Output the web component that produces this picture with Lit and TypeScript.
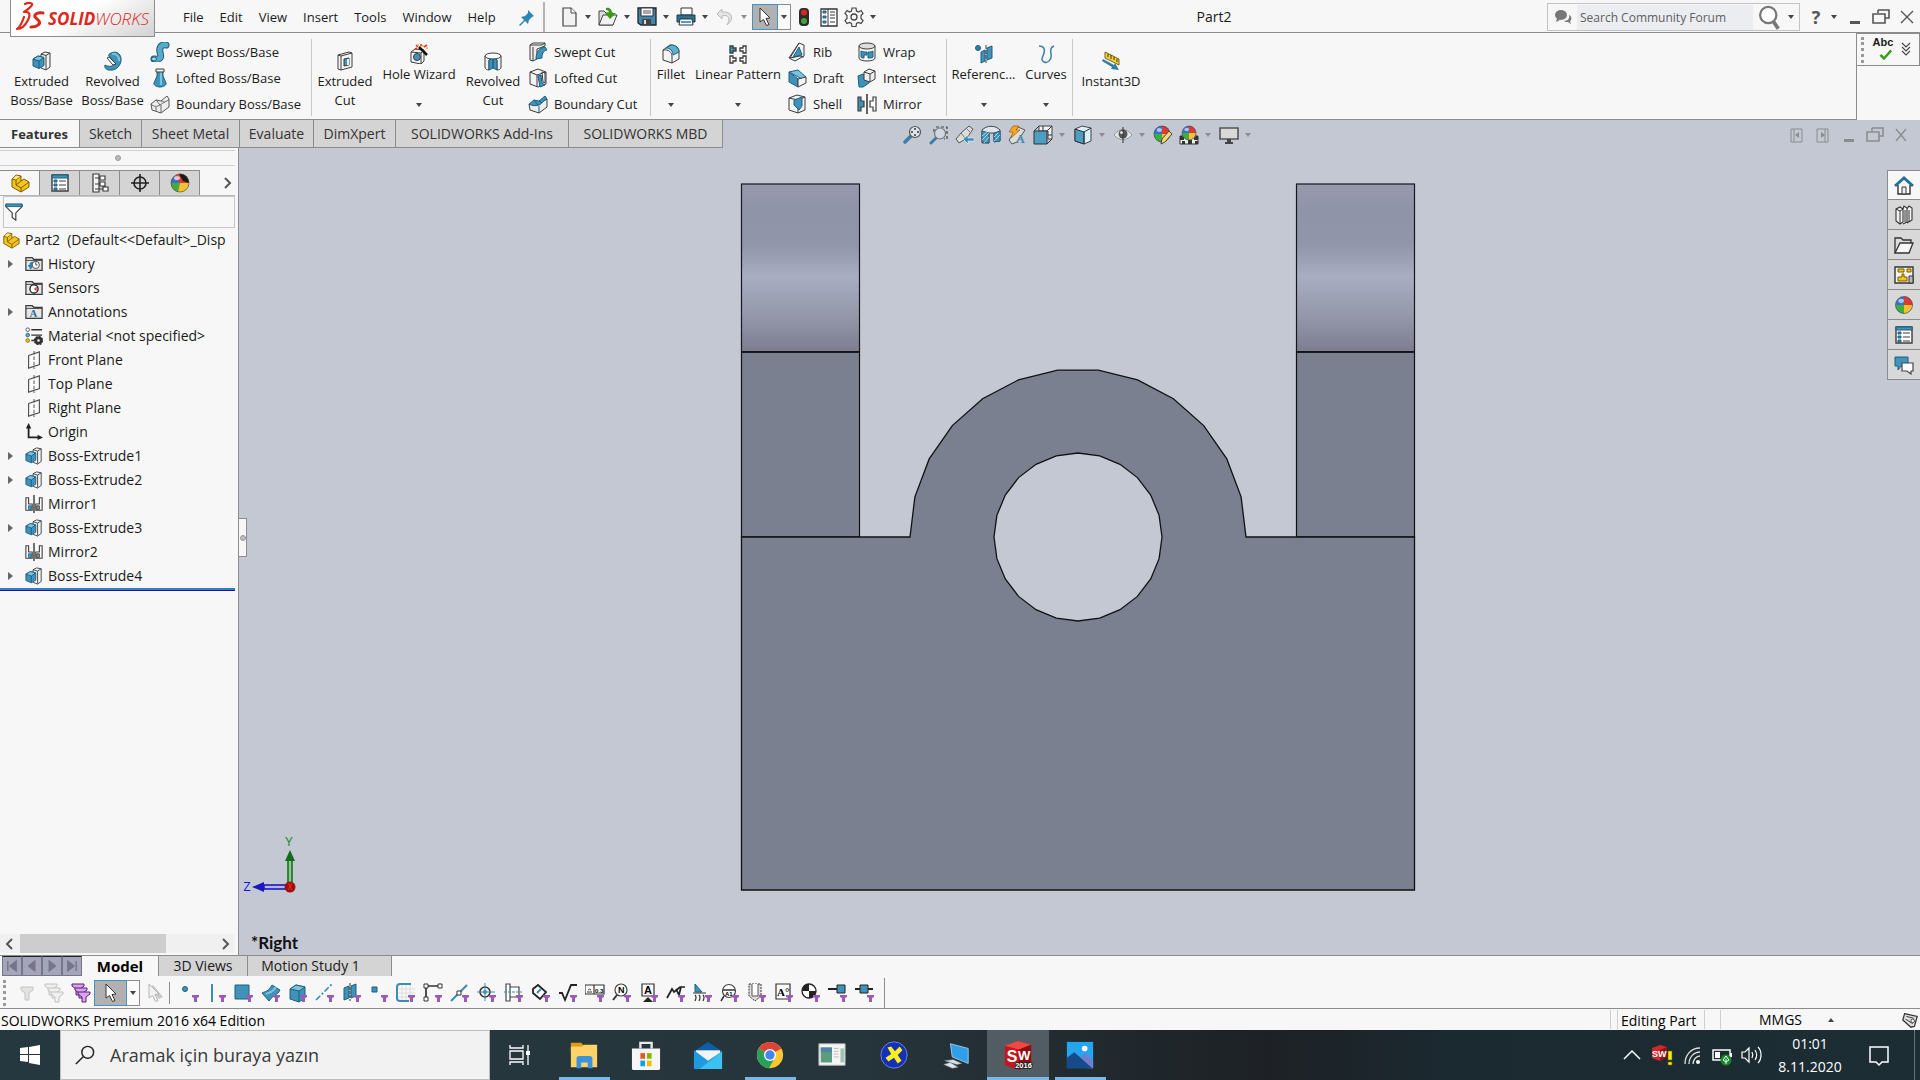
import { LitElement, html, svg, css, TemplateResult, SVGTemplateResult } from "lit";
import { customElement, state } from "lit/decorators.js";
import { classMap } from "lit/directives/class-map.js";

/* ---------- icon artwork, drawn on a 20 x 20 grid ---------- */

const K = "#3c3c3c";
const B = "#3f93b8";
const L = "#7cc3de";
const D = "#1d5f80";

const slabCube = svg`
  <path d="M9 3l4-2 5 1v14l-4 3-5-2z" fill="#f4f4f4" stroke=${K} />
  <path d="M14 4.500v14M9 3l5 1.500 4-2.500" fill="none" stroke=${K} />
  <path d="M1 8l5-3 6 1.500v8l-5 3-6-2.500z" fill=${B} stroke=${D} />
  <path d="M1 8l6 2 5-3.500-6-1.500z" fill=${L} stroke=${D} /><path d="M7 10v7.500" stroke=${D} />`;

const ball = (cx: number, cy: number, r: number) => svg`
  <circle cx=${cx} cy=${cy} r=${r} fill="#3b6fd0" />
  <path d="M${cx} ${cy - r}a${r} ${r} 0 0 1 ${r} ${r}h-${r}z" fill="#dc3a33" />
  <path d="M${cx - r} ${cy}a${r} ${r} 0 0 0 ${r} ${r}v-${r}z" fill="#3fae3b" />
  <path d="M${cx} ${cy + r}a${r} ${r} 0 0 0 ${r} -${r}h-${r}z" fill="#f1c232" />
  <ellipse cx=${cx - r / 3} cy=${cy - r / 2} rx=${r / 3} ry=${r / 4} fill="#fff" opacity=".6" />
  <circle cx=${cx} cy=${cy} r=${r} fill="none" stroke="#444" stroke-width=".6" />`;

const managerBall = svg`
  <circle cx="10" cy="10" r="9" fill="#e0392f" />
  <path d="M10 10L1 10a9 9 0 0 1 4-7z" fill="#3b6fd0" /><path d="M10 10H1a9 9 0 0 0 7 9z" fill="#3fae3b" />
  <path d="M10 10l-2 9a9 9 0 0 0 11-9z" fill="#f1c232" /><path d="M9 1c6-1 10 4 10 9l-6-2z" fill="#191919" />
  <ellipse cx="7" cy="5" rx="3" ry="2" fill="#fff" opacity=".7" /><circle cx="10" cy="10" r="9" fill="none" stroke="#444" stroke-width=".6" />`;

const funnel = svg`<path d="M12 12h7v2l-2 1v4h-3v-4l-2-1z" fill="#9a5bb5" />`;

const folder = svg`
  <path d="M1 17V3h7l2 2h9v12z" fill="#e6e6e6" stroke=${K} stroke-width="1.400" />
  <path d="M1 6h18" stroke=${K} />`;

const part = svg`
  <path d="M2 6l4-4 5 1v5l3-2 5 3v5l-8 5-9-5z" fill="#f5c518" stroke="#7a5a08" />
  <path d="M2 6l4 1v5l5 3 8-6M6 7l5-4M11 15v4M6 12l5-4" fill="none" stroke="#7a5a08" />
  <path d="M3 5.500l3-3 4 1-4 3z" fill="#ffe680" />`;

const cursor = (fill: string, line: string) => svg`
  <path d="M5 1l10 10-4 .500 3 6-2.500 1-3-6L5 15z" fill=${fill} stroke=${line} />`;

const tripleFunnel = (fill: string, line: string) => svg`
  <path d="M1 1h12v2l-4 3v6H5V6L1 3z" fill=${fill} stroke=${line} />
  <path d="M4 5h12v2l-4 3v5H8v-5L4 7z" fill=${fill} stroke=${line} />
  <path d="M7 9h12v2l-4 3v5h-4v-5L7 11z" fill=${fill} stroke=${line} />`;

const cube = svg`
  <path d="M2 6l6-4 9 2v11l-6 4-9-3z" fill=${B} stroke=${D} />
  <path d="M2 6l9 2 6-4-9-2z" fill=${L} stroke=${D} /><path d="M11 8v11" stroke=${D} />`;

const plane = svg`
  <path d="M4 5l12-4v14L4 19z" fill="#fbfbfb" stroke="#555" stroke-width="1.300" />
  <path d="M10 0v20" stroke="#444" stroke-dasharray="4 2" />`;

const restore = (c: string) => svg`
  <path d="M7 3h11v8h-4M7 3v3M2 7h12v9H2z" fill="none" stroke=${c} stroke-width="1.600" />`;

const listIcon = svg`
  <path d="M2 2h16v16H2z" fill="#fff" stroke=${K} stroke-width="1.400" />
  <path d="M2 2h16v3H2z" fill=${B} stroke=${D} />
  <path d="M4 7h3v2H4zM4 11h3v2H4zM4 15h3v2H4z" fill=${B} stroke=${D} />
  <path d="M9 8h7M9 12h7M9 16h7" stroke=${K} />`;

const ICONS: Record<string, SVGTemplateResult> = {
  /* ribbon */
  bossExtrude: slabCube,
  bossRevolve: svg`
    <path d="M8 2C14-1 19 4 18 10S12 20 6 19c-3 0-5-3-4-5 3 2 9 2 10-2L6 5C5 4 6 3 8 2z" fill=${B} stroke=${D} />
    <path d="M9 3c4-1 8 3 7 7" stroke=${L} stroke-width="2" fill="none" />
    <path d="M6 6l7 7-3 1-6-7z" fill="#fff" stroke=${K} />`,
  bossSweep: svg`
    <path d="M4 17c8 1 7-3 6-7s1-8 6-7" fill="none" stroke=${D} stroke-width="7" stroke-linecap="round" />
    <path d="M4 17c8 1 7-3 6-7s1-8 6-7" fill="none" stroke="#58a9ca" stroke-width="5" stroke-linecap="round" />
    <ellipse cx="4" cy="17" rx="2.500" ry="2" fill="#9fd6ea" stroke=${D} />`,
  bossLoft: svg`
    <path d="M7 2h6v6l3 7c1 2-3 4-6 4s-7-2-6-4l3-7z" fill=${B} stroke=${D} />
    <path d="M11 4v13" stroke=${L} stroke-width="2" /><path d="M6 1h8v3H6z" fill="#f0f0f0" stroke=${K} />`,
  bossBoundary: svg`
    <path d="M1 10l5-4 5 1 6-5 2 3v8l-8 6-9-3z" fill="#eee" stroke="#555" />
    <path d="M1 10c3 3 6 3 9 1s4-3 9-5M11 11v8M6 6c1 2 3 3 4 5M11 7c2 0 3 1 4 2M6 13v4" fill="none" stroke="#666" />`,
  cutExtrude: svg`
    <path d="M3 4l11-3 3 1v14l-11 3-3-1z" fill="#f5f5f5" stroke=${K} /><path d="M6 5l11-3M6 5v14M3 4l3 1" stroke=${K} fill="none" />
    <path d="M9 8l5-1v7l-5 1z" fill=${B} stroke=${K} /><path d="M12 8h2v6h-2z" fill="#dff2fa" />`,
  holeWizard: svg`
    <path d="M2 8l4-3 9 1v11l-3 3-10-2z" fill="#f3f3f3" stroke=${K} /><path d="M2 8l10 1 3-3M12 9v11" fill="none" stroke=${K} />
    <circle cx="8" cy="13" r="3.500" fill=${B} stroke=${K} />
    <path d="M10 3l8 8" stroke="#111" stroke-width="2.500" />
    <path d="M7 1l2 2M12 0v2M15 3l3-2M6 5l2-1" stroke="#d33" stroke-width="1.600" /><path d="M9 0v2M14 1v2M17 4h2" stroke="#f3b51b" stroke-width="1.600" />`,
  cutRevolve: svg`
    <path d="M2 5v11c0 2 2 3 4 3V9l4-3 4 3v10c2 0 4-1 4-3V5z" fill="#f2f2f2" stroke=${K} />
    <path d="M6 9l4-3v11l-4 2zM14 9l-4-3v11l4 2z" fill=${B} stroke=${D} />
    <ellipse cx="10" cy="5" rx="8" ry="3" fill="#fafafa" stroke=${K} />`,
  cutSweep: svg`
    <path d="M2 3l3-2h12v3l-8 3v10l-4 2-3-1z" fill="#eee" stroke=${K} /><path d="M2 3h12l3-2M5 5v14" stroke=${K} fill="none" />
    <path d="M8 17c0-7 3-11 9-12l2 3c-4 1-5 4-5 8z" fill=${B} stroke=${D} />`,
  cutLoft: svg`
    <path d="M2 4l8-3 8 3v12l-8 3-8-3z" fill="#f3f3f3" stroke=${K} /><path d="M2 4l7 3v12M9 7l9-3" fill="none" stroke=${K} />
    <path d="M10 8l3-1 1 8 3 2-5 2z" fill=${B} stroke=${D} /><path d="M14 4l3 1v10l-2-1z" fill="#fff" stroke=${K} />`,
  cutBoundary: svg`
    <path d="M1 10l8 1 10-6v8l-8 6-9-3z" fill="#eee" stroke=${K} />
    <path d="M1 10l5-4 5 1 6-5 2 3c-4 1-5 5-8 6s-7 1-10-1z" fill=${B} stroke=${D} /><path d="M6 6l4 5M11 7l3 2M11 12v7" stroke=${D} />`,
  fillet: svg`
    <path d="M2 6l7-5c5 0 9 2 9 7v7l-7 4-9-3z" fill="#f5f5f5" stroke=${K} /><path d="M2 6c6-1 9 3 9 6v7" fill="none" stroke=${K} />
    <path d="M5 4l5-3c5 0 8 3 8 7l-6 3C12 7 9 4 5 4z" fill="#5fb0d0" stroke=${D} />`,
  pattern: svg`
    <path d="M2 2h3v2h3v3H5v2H2z" fill=${B} stroke=${K} stroke-width="1.300" />
    <path d="M12 4h3V2h3v7h-3V7h-3zM2 12h3v2h3v3H5v2H2zM12 14h3v-2h3v7h-3v-2h-3z" fill="#fff" stroke=${K} stroke-width="1.300" />`,
  rib: svg`
    <path d="M12 1l5 2v11l-9 5-6-3z" fill="#f2f2f2" stroke=${K} /><path d="M12 1l-9 15 10-2 4 1" fill="none" stroke=${K} />
    <path d="M12 5l3 8-9 2z" fill=${B} stroke=${D} />`,
  draft: svg`
    <path d="M2 4l9-2 8 7-4 2z" fill=${L} stroke=${D} /><path d="M2 4l9 7v8l-9-5z" fill=${B} stroke=${D} />
    <path d="M11 11l8-2v6l-8 4z" fill="#f3f3f3" stroke=${K} />`,
  shell: svg`
    <path d="M2 4l8-3 8 2v13l-7 3-9-3z" fill="#f4f4f4" stroke=${K} /><path d="M2 4l9 2v13M11 6l7-3" fill="none" stroke=${K} />
    <path d="M7 6l8-3v9l-3 4-5-5z" fill=${B} stroke=${D} />`,
  wrap: svg`
    <path d="M2 4v12c0 4 16 4 16 0V4z" fill="#f4f4f4" stroke=${K} /><ellipse cx="10" cy="4" rx="8" ry="3" fill="#ddd" stroke=${K} />
    <path d="M4 9c2 1 4 1 6 1v3H7v3c-1 0-3 0-3-1zM11 10c2 0 4 0 5-1v6c-1 1-3 1-5 1z" fill=${B} stroke=${D} />`,
  intersect: svg`
    <path d="M1 8l5-2 6 5v4l-6 4H2z" fill=${B} stroke=${D} /><path d="M7 4l5-3 6 2v8l-5 3-6-2z" fill="#eee" stroke=${K} />
    <path d="M7 4l6 2 5-3M13 6v8" fill="none" stroke=${K} />`,
  mirror: svg`
    <path d="M1 3h3v4h3v6H4v4H1z" fill=${B} stroke=${K} stroke-width="1.200" />
    <path d="M19 3h-3v4h-3v6h3v4h3z" fill="#fff" stroke=${K} stroke-width="1.200" /><path d="M10 0v20" stroke="#111" stroke-width="1.300" />`,
  reference: svg`
    <circle cx="4" cy="4" r="2.500" fill="#2b7fa8" stroke=${D} />
    <path d="M7 8l4-2v11l-4 2zM13 4l5-2v12l-5 2z" fill=${B} stroke=${D} /><path d="M12 1v18" stroke=${K} stroke-dasharray="4 1" />`,
  curves: svg`<path d="M3 2c5 0 6 3 5 7s-4 7 0 9 8-3 7-8 0-7 3-8" fill="none" stroke="#3c7fa8" stroke-width="1.500" />`,
  instant: svg`
    <path d="M4 1l14 7v6L4 7z" fill="#f5d23c" stroke="#7b6510" /><path d="M7 3v3M10 4v4M13 6v3M16 8v3" stroke="#333" />
    <path d="M2 8l11 6 1-2 4 7-8-1 1-2L1 10z" fill="#2f7ea5" />`,

  /* title bar */
  pin: svg`<path d="M11 3l6 6-2 1-3 3-1 4-3-3-5 5-1-1 5-5-3-3 4-1 3-3z" fill="#2e86b5" />`,
  newDoc: svg`<path d="M4 1h8l5 5v13H4z" fill="#f2f2f2" stroke="#444" stroke-width="1.200" /><path d="M12 1v5h5" fill="#fff" stroke="#444" />`,
  open: svg`
    <path d="M1 18V4h5l2 2h7v12z" fill="#ddd" stroke="#444" /><path d="M1 18l4-10h14l-4 10z" fill="#f1f1f1" stroke="#444" />
    <path d="M8 1c4-1 6 2 6 5h4l-6 6-5-6h4c0-2-1-3-3-3z" fill="#3a9b12" />`,
  save: svg`
    <path d="M1 1h18v17H4l-3-2z" fill="#3f88ad" stroke="#222" stroke-width="1.300" /><path d="M4 1h12v8H4z" fill="#fff" stroke="#333" />
    <path d="M6 4h8M6 6h8" stroke="#555" /><path d="M5 12h9v6H5z" fill="#444" /><path d="M7 13h2v4H7z" fill="#ddd" />`,
  print: svg`
    <path d="M5 1h11v7H5z" fill="#fff" stroke="#333" /><path d="M1 8h18v7H1z" fill="#2f6f92" stroke="#1e3d4d" />
    <path d="M4 12h12l1 6H3z" fill="#fff" stroke="#333" /><path d="M5 15h10" stroke="#4ba3c7" stroke-width="2" />`,
  undo: svg`<path d="M7 2L2 7l5 5V9c6-2 9 2 5 9 8-6 5-14-5-13z" fill="#e4e4e4" stroke="#b9b9b9" />`,
  select: cursor("#fff", "#333"),
  traffic: svg`
    <rect x="5" y="1" width="10" height="18" rx="4" fill="#2b2b2b" /><circle cx="10" cy="5.500" r="3" fill="#d6281e" /><circle cx="10" cy="14" r="3" fill="#3fa43a" />`,
  options: svg`
    <path d="M2 2h16v17H2z" fill="#fff" stroke="#333" stroke-width="1.300" /><path d="M9 2v17" stroke="#333" />
    <path d="M4 4h3v2H4zM4 9h3v2H4zM4 14h3v2H4z" fill=${B} stroke=${D} /><path d="M11 5h5M11 8h5M11 11h5M11 15h5" stroke="#333" />`,
  gear: svg`<circle cx="10" cy="10" r="3" fill="none" stroke="#444" stroke-width="1.300" />
    <path d="M8 1h4l.5 3 2 1 2.500-1.500 2 3-2 2v3l2 2-2 3-2.500-1-2 1-.5 3H8l-.5-3-2-1L3 16.500l-2-3 2-2v-3l-2-2 2-3L5.500 5l2-1z" fill="none" stroke="#444" stroke-width="1.200" />`,
  bubbles: svg`<ellipse cx="8" cy="8" rx="6" ry="5" fill="#777" /><path d="M4 11l-1 4 4-2zM11 14c4 0 6-3 5-6 3 1 3 5 1 6l1 3-3-2c-2 0-3 0-4-1z" fill="#777" />`,
  magnifier: svg`<circle cx="9" cy="8" r="6.500" fill="#fff" stroke="#777" stroke-width="1.800" /><path d="M13 13l4 6" stroke="#777" stroke-width="3" />`,
  minimize: svg`<path d="M5 14h10v3H5z" fill="#555" />`,
  restore: restore("#555"),
  close: svg`<path d="M4 4l12 12M16 4L4 16" stroke="#555" stroke-width="1.400" />`,
  minimizeDim: svg`<path d="M5 14h10v3H5z" fill="#8b8c92" />`,
  restoreDim: restore("#8b8c92"),
  closeDim: svg`<path d="M5 4l10 12M15 4L5 16" stroke="#8b8c92" stroke-width="1.300" />`,
  dockLeft: svg`<path d="M4 4h11v13H4zM7 4v13" fill="none" stroke="#8b8c92" /><path d="M12 7v6l-4-3z" fill="#8b8c92" />`,
  dockRight: svg`<path d="M4 4h11v13H4zM12 4v13" fill="none" stroke="#8b8c92" /><path d="M8 7v6l4-3z" fill="#8b8c92" />`,
  spell: svg`<path d="M7 10l3 3 7-8 2 2-9 10-5-5z" fill="#34a012" />`,
  more: svg`<path d="M6 3l4 4 4-4M6 7l4 4 4-4M6 11l4 4 4-4" fill="none" stroke="#444" stroke-width="1.100" />`,

  /* heads-up view toolbar */
  zoomFit: svg`<path d="M2 17l6-6" stroke="#3b7da6" stroke-width="3.500" stroke-linecap="round" /><circle cx="12" cy="7" r="5.500" fill="#dfe5ee" stroke="#555" stroke-width="1.200" />
    <path d="M12 3v2M12 9v2M8 7h2M14 7h2" stroke="#333" stroke-width="1.500" />`,
  zoomArea: svg`<path d="M7 2h11v12h-3M5 4v4" fill="none" stroke="#444" stroke-width="1.200" stroke-dasharray="3 2" />
    <path d="M2 18l5-5" stroke="#3b7da6" stroke-width="3" stroke-linecap="round" /><circle cx="11" cy="8.500" r="5.500" fill="#cfd7e2" stroke="#777" stroke-width="1.200" />`,
  prevView: svg`<path d="M1 14l5-6 8-7 4 3-6 9-8 5z" fill="#ddd" stroke="#555" /><path d="M11 3l5 5M6 8l4 5" stroke="#777" />
    <path d="M8 14l5-4v3h6v3h-6v3z" fill="#3b8db5" stroke="#fff" stroke-width=".5" />`,
  section: svg`<path d="M1 5c5-5 13-5 18 0v11h-6V8H8v10H1z" fill="#e2e4e9" stroke="#444" /><path d="M1 6l7 2v10l-7-1zM13 8l6-2v10l-6 1z" fill="#4496bb" stroke=${D} />
    <path d="M1 11l5-4M1 15l7-7M3 18l5-6M13 12l4-4M13 16l6-6" stroke="#cde" stroke-width=".8" />`,
  viewTools: svg`<path d="M2 15l9-13 7 3-8 12-5 2z" fill="#ddd" stroke="#555" /><path d="M6 1h6l-3 4h4l-9 8 2-6H2z" fill="#f5a623" stroke="#a85d00" stroke-width=".7" />
    <text x="9" y="18" font-size="12" font-family="Liberation Serif, serif" font-weight="bold" fill="#3b8db5">A</text>`,
  orient: svg`<path d="M6 1h13v13h-4V6H6z" fill="#eef0f4" stroke="#444" /><path d="M1 6h13v13H1z" fill="#4c9ec4" stroke="#333" /><path d="M1 6l5-5M14 6l5-5M14 19l5-5M10 1v5M15 10h4" stroke="#333" fill="none" />`,
  display: svg`<path d="M2 4l7-3 9 2v13l-7 3-9-3z" fill="#d9f0f8" stroke="#444" /><path d="M2 4l9 3v12l-9-3z" fill="#4c9ec4" stroke="#333" /><path d="M11 7l7-4M11 7v12" stroke="#333" fill="none" />`,
  eye: svg`<path d="M1 10c5-7 13-7 18 0-5 6-13 6-18 0z" fill="#e6e7ea" stroke="#999" /><circle cx="10" cy="9" r="4.500" fill="#555" /><path d="M10 2v16" stroke="#333" /><circle cx="8.500" cy="7.500" r="1.500" fill="#ddd" />`,
  appearance: svg`${ball(9, 9, 8)}<path d="M9 14l7-8 3 3-7 8-4 2z" fill="#f4d87c" stroke="#444" />`,
  scene: svg`<path d="M1 11h18v8H1z" fill="#eee" stroke="#333" /><path d="M1 11h4v4H1zM9 15h4v4H9zM15 11h4v4h-4zM3 16h3v3H3zM16 16h3v3h-3z" fill="#333" />${ball(10, 8, 7)}`,
  monitor: svg`<path d="M1 3h18v11H1z" fill="#d8d8d8" stroke="#555" stroke-width="1.600" /><path d="M8 14h4v3h2v2H6v-2h2z" fill="#444" />`,

  /* feature manager */
  part,
  property: listIcon,
  config: svg`<path d="M3 1h6v18H3z" fill="#f5f5f5" stroke=${K} stroke-width="1.200" /><path d="M5 5h5M5 11h5M5 16h8" stroke=${K} />
    <path d="M10 3h5v4h-5zM10 9h5v4h-5zM13 14h5v4h-5z" fill="#fff" stroke=${K} stroke-width="1.200" />`,
  dimx: svg`<circle cx="10" cy="10" r="6" fill="none" stroke="#222" stroke-width="1.600" /><path d="M10 1v18M1 10h18" stroke="#222" stroke-width="1.600" />`,
  displayMgr: managerBall,
  next: svg`<path d="M8 5l5 5-5 5" fill="none" stroke="#555" stroke-width="2" />`,
  prev: svg`<path d="M12 5l-5 5 5 5" fill="none" stroke="#555" stroke-width="2" />`,
  filter: svg`<path d="M1 2h18v2l-7 7v8l-4-3v-5L1 4z" fill="#fff" stroke=${K} stroke-width="1.300" /><path d="M1 1h18v3H1z" fill="#3f93b8" stroke=${D} />`,
  history: svg`${folder}<circle cx="12" cy="11" r="4" fill="#fff" stroke=${K} /><path d="M12 8v3h2" stroke=${K} fill="none" /><path d="M3 11l3 5 3-3c-2 0-1-5 1-5-3-1-5 0-5 3z" fill="#2f84ad" />`,
  sensors: svg`${folder}<circle cx="10" cy="11" r="4.500" fill="#fff" stroke="#222" stroke-width="1.500" /><path d="M10 11l3-3v6z" fill="#e0442e" />`,
  annotations: svg`${folder}<text x="5" y="16" font-size="12" font-weight="bold" font-family="Liberation Serif, serif" fill="#2c7196">A</text>`,
  material: svg`<circle cx="3" cy="3" r="2" fill="#fff" stroke="#555" /><circle cx="3" cy="9" r="2" fill="#58b2d4" stroke="#28607c" /><circle cx="3" cy="15" r="2" fill="#f5c518" stroke="#8a6a00" />
    <path d="M7 3h12M7 9h12M7 15h4" stroke="#333" stroke-width="1.600" /><circle cx="15" cy="15" r="3" fill="none" stroke="#333" stroke-width="3" /><circle cx="15" cy="15" r="4.500" fill="none" stroke="#333" stroke-width="1.500" stroke-dasharray="2 1.500" />`,
  plane,
  origin: svg`<path d="M4 4v12h12" fill="none" stroke="#222" stroke-width="2" /><path d="M4 0l3 6H1zM20 16l-6-3v6z" fill="#222" />`,
  boss: slabCube,
  mirrorTree: svg`
    <path d="M1 3h3v7h4v7H1z" fill="#fff" stroke=${K} stroke-width="1.200" /><path d="M19 3h-3v7h-4v7h7z" fill="#fff" stroke=${K} stroke-width="1.200" />
    <path d="M4 12h3v4H4z" fill="#4ba3c7" stroke=${D} /><path d="M13 12h3v4h-3z" fill="#999" stroke=${K} /><path d="M10 0v20" stroke="#111" stroke-width="1.300" />`,

  /* task pane */
  home: svg`<path d="M4 10v9h12v-9" fill="#fff" stroke="#333" stroke-width="1.400" /><path d="M1 11l9-8 9 8" fill="none" stroke="#26718f" stroke-width="3" /><path d="M8 12h4v7H8z" fill="#eee" stroke="#333" />`,
  library: svg`<path d="M2 4l4-2 3 2v13l-3 2-4-3zM9 4l1-3 3 2v14l-4 2M13 4l2-3 3 2v12l-5 3" fill="#f3f3f3" stroke="#333" stroke-width="1.100" /><path d="M2 4l4 2v13M6 6l3-2M11 5v12M15 5v12" fill="none" stroke="#333" />`,
  folderOpen: svg`<path d="M1 18V3h6l2 2h8v3" fill="#ddd" stroke="#333" stroke-width="1.300" /><path d="M1 18l5-10h13l-4 10z" fill="#f7f7f7" stroke="#333" stroke-width="1.300" />`,
  palette: svg`<path d="M1 2h18v16H1z" fill="#f4f4f4" stroke="#333" stroke-width="1.400" /><path d="M4 4h6v3H4zM13 4h4v3h-4zM8 9h2v3h3v4H4v-4h4z" fill="#f5c518" stroke="#765c00" /><path d="M15 11h4v7h-4z" fill="#bbb" stroke="#333" />`,
  sphere: ball(10, 10, 8.5),
  forum: svg`<path d="M1 2h13v9H7l-3 4v-4H1z" fill="#4195bb" stroke=${D} /><path d="M8 8h11v8h-2v3l-4-3H8z" fill="#fff" stroke="#444" stroke-width="1.200" />`,

  /* selection filter toolbar */
  clearFilter: svg`<path d="M4 4h12v3l-4 3v7H8v-7L4 7z" fill="#e2e2e2" stroke="#c4c4c4" />`,
  clearAll: tripleFunnel("#f0f0f0", "#c0c0c0"),
  allFilters: tripleFunnel("#d9a4ec", "#5b1e78"),
  invert: svg`<path d="M9 2l10 12-4 2L6 5z" fill="#c8c8c8" />${cursor("#f2f2f2", "#b4b4b4")}`,
  fVertex: svg`<circle cx="5" cy="6" r="2.500" fill=${B} stroke=${D} />${funnel}`,
  fEdge: svg`<path d="M5 1v18" stroke="#3c8db4" stroke-width="2" />${funnel}`,
  fFace: svg`<path d="M1 2h14v14H1z" fill=${B} stroke=${D} />${funnel}`,
  fSurface: svg`<path d="M1 10c4-2 6-1 10-8l8 5c-3 6-6 4-11 11z" fill=${B} stroke=${D} /><path d="M5 11c4-2 6-1 10-7" stroke=${L} fill="none" stroke-width="2" />${funnel}`,
  fBody: svg`${cube}${funnel}`,
  fAxis: svg`<path d="M1 17L17 1" stroke="#3c8db4" stroke-width="1.700" stroke-dasharray="6 2 2 2" />${funnel}`,
  fPlane: svg`<path d="M2 5l5-2v12l-5 2zM9 3l5-2v12l-5 2z" fill=${B} stroke=${D} /><path d="M8 0v18" stroke="#333" stroke-dasharray="3 1" />${funnel}`,
  fPoint: svg`<path d="M3 4h5v5H3z" fill=${B} stroke=${D} />${funnel}`,
  fSketch: svg`<path d="M6 0v18M10 0v18M14 0v18M0 6h19M0 10h19M0 14h19" stroke="#ddd" /><path d="M15 1H4c-2 0-3 1-3 3v11c0 2 1 3 3 3h9" fill="none" stroke="#3c8db4" stroke-width="2" />${funnel}`,
  fSegment: svg`<path d="M3 3h14M3 3v14" stroke="#333" stroke-width="1.700" /><path d="M1 1h4v4H1zM15 1h4v4h-4zM1 14h4v4H1z" fill="#fff" stroke="#333" />${funnel}`,
  fMid: svg`<path d="M1 18L17 2" stroke="#3c8db4" stroke-width="2" /><path d="M7 8h4v4H7z" fill="#fff" stroke="#333" />${funnel}`,
  fCenter: svg`<circle cx="8" cy="9" r="5" fill="none" stroke="#333" stroke-width="1.600" /><circle cx="8" cy="9" r="2" fill="#3c8db4" /><path d="M8 0v18M0 9h18" stroke="#3c8db4" />${funnel}`,
  fLine: svg`<path d="M2 1h4v17H2zM6 4h9v10H6z" fill="#fff" stroke="#444" stroke-width="1.200" /><path d="M0 9h18" stroke="#3c8db4" stroke-dasharray="3 1" />${funnel}`,
  fDim: svg`<path d="M2 10V6l5-4 8 7-6 7z" fill="#fff" stroke="#222" stroke-width="1.800" /><path d="M6 10l4-4" stroke="#3c8db4" stroke-width="2" />${funnel}`,
  fFinish: svg`<path d="M1 10h3l3 7 6-15h6" fill="none" stroke="#222" stroke-width="1.800" />${funnel}`,
  fTol: svg`<path d="M0 2h19v9H0zM9 2v9" fill="#fff" stroke="#333" stroke-width="1.200" /><path d="M2 9h5M3 7a2 2 0 0 1 3 0" stroke="#333" fill="none" /><text x="10" y="10" font-size="6" font-family="Liberation Sans, sans-serif" font-weight="bold">0.3</text>${funnel}`,
  fNote: svg`<circle cx="9" cy="7" r="6" fill="#fff" stroke="#444" stroke-width="1.200" /><path d="M5 12l-4 5" stroke="#333" stroke-width="2" /><text x="6" y="10" font-size="9" font-weight="bold" font-family="Liberation Sans, sans-serif">N</text>${funnel}`,
  fDatum: svg`<path d="M3 1h12v12H3z" fill="#fff" stroke="#333" stroke-width="1.200" /><path d="M9 14l-5 5h10z" fill="#222" /><text x="5" y="11" font-size="11" font-weight="bold" font-family="Liberation Sans, sans-serif">A</text>${funnel}`,
  fWeld: svg`<path d="M1 15L6 6l2 3 6-5h5M10 6l3 6 2-8" fill="none" stroke="#222" stroke-width="1.700" />${funnel}`,
  fBead: svg`<path d="M2 1l7 8H2z" fill=${B} stroke=${D} /><path d="M2 12c2 2 1 4 0 6M6 12c2 2 1 4 0 6M10 12c2 2 1 4 0 6M0 10h13" fill="none" stroke="#333" stroke-width="1.200" />${funnel}`,
  fTarget: svg`<circle cx="9" cy="8" r="6.500" fill="#fff" stroke="#444" stroke-width="1.200" /><path d="M3 7h12M4 13l-3 5" stroke="#333" stroke-width="1.500" /><text x="5" y="13" font-size="6" font-weight="bold" font-family="Liberation Sans, sans-serif">A1</text>${funnel}`,
  fThread: svg`<path d="M2 1h12v12l-6 5-6-5z" fill="#ddd" stroke="#333" stroke-dasharray="2 1" /><path d="M5 1v12h6V1" fill="#fff" stroke="#555" />${funnel}`,
  fSymbol: svg`<path d="M2 1h14v15H2z" fill="#fff" stroke="#333" stroke-width="1.200" /><text x="3" y="13" font-size="11" font-family="Liberation Serif, serif" font-weight="bold">A°</text>${funnel}`,
  fMass: svg`<circle cx="8" cy="8" r="7" fill="#fff" stroke="#222" stroke-width="1.300" /><path d="M8 1v7H1a7 7 0 0 1 7-7zM8 15V8h7a7 7 0 0 1-7 7z" fill="#222" />${funnel}`,
  fRoute: svg`<path d="M0 6h9" stroke="#222" stroke-width="2" /><path d="M9 2h8v8H9z" fill=${B} stroke="#222" />${funnel}`,
  fJoint: svg`<path d="M0 6h18" stroke="#222" stroke-width="2" /><path d="M5 2h8v8H5z" fill=${B} stroke="#222" />${funnel}`,
  tag: svg`<path d="M4 3l14 3-3 11-4 1-9-8z" fill="#ddd" stroke="#333" stroke-width="1.400" /><path d="M6 6l8 2M5 9l8 5" stroke="#333" /><circle cx="13" cy="11" r="2" fill="#fff" stroke="#333" />`,
};

const icon = (name: string): TemplateResult =>
  html`<svg class="icon" viewBox="0 0 20 20" aria-hidden="true">${ICONS[name]}</svg>`;

/* ---------- taskbar artwork, drawn on a 32 x 32 grid ---------- */

const APP_ART: Record<string, SVGTemplateResult> = {
  files: svg`<path d="M2 3h11l3 3-1 8H2z" fill="#e09c10" /><path d="M2 7h12l2-2h14v24H2z" fill="#fdd36a" /><path d="M8 30V20c0-2 1-3 3-3h11c2 0 3 1 3 3v10h-5v-6h-7v6z" fill="#3d92dc" />`,
  store: svg`<path d="M10 9V3h12v6" fill="none" stroke="#e9e9e9" stroke-width="2.500" /><path d="M1 9h30v22l-1 1H2l-1-1z" fill="#f6f6f6" />
    <path d="M10 14h5v6h-5z" fill="#f25022" /><path d="M17 14h5v6h-5z" fill="#7fba00" /><path d="M10 22h5v6h-5z" fill="#00a4ef" /><path d="M17 22h5v6h-5z" fill="#ffb900" />`,
  mail: svg`<path d="M1 12L16 2l15 10z" fill="#0a5fa8" /><path d="M3 11h26v12H3z" fill="#f4f4f4" /><path d="M1 11l15 11 15-10v19H1z" fill="#1e9be0" /><path d="M31 12v19H7z" fill="#3dc1ef" />`,
  chrome: svg`<circle cx="16" cy="16" r="14" fill="#fbc92f" /><path d="M16 16L4 9a14 14 0 0 1 24 0z" fill="#db4437" /><path d="M4 9a14 14 0 0 0 11 21l6-11-5-3z" fill="#27a05a" /><path d="M16 9h12.500" stroke="#db4437" />
    <circle cx="16" cy="16" r="6.500" fill="#fff" /><circle cx="16" cy="16" r="5" fill="#4285f4" />`,
  window: svg`<path d="M2 4h28v23H2z" fill="#f5f5f5" stroke="#aaa" /><path d="M4 8h12v16H4z" fill="#5c9b7b" /><path d="M4 8h12v5H4z" fill="#4c86a5" /><path d="M18 9h5M18 12h5M18 15h5M18 18h5" stroke="#bbb" /><path d="M25 9h4v15h-4z" fill="#9fc3b4" />`,
  xapp: svg`<circle cx="16" cy="16" r="14" fill="#1530b8" stroke="#6f83e8" /><path d="M9 8l4-1 4 5 5-5 3 4-5 5 4 6-4 3-4-6-6 4-3-4 6-4z" fill="#ffee1c" />`,
  computer: svg`<path d="M10 4l19 5v16l-17-7z" fill="#2e9fe8" stroke="#9fc8e4" /><path d="M4 22l9-1 9 4-5 1zM3 26l7-2 8 5-6 1z" fill="#dfe6ea" stroke="#89939a" stroke-width=".6" />`,
  solidworks: svg`<path d="M2 6L16 1l14 4v20l-13 7L2 27z" fill="#c4161c" /><path d="M2 6l15 4 13-5-14-4z" fill="#ee4a44" /><path d="M17 10l13-5v20l-13 7z" fill="#8f0d12" />
    <text x="4" y="23" font-size="17" font-weight="bold" font-family="Liberation Sans, sans-serif" fill="#fff">S</text><text x="16" y="21" font-size="14" font-weight="bold" font-family="Liberation Sans, sans-serif" fill="#fff">W</text>
    <text x="13" y="30" font-size="8" font-weight="bold" font-family="Liberation Sans, sans-serif" fill="#fff" stroke="#222" stroke-width="2" paint-order="stroke">2016</text>`,
  photos: svg`<path d="M2 2h28v28H2z" fill="#25a5ee" /><circle cx="21" cy="9" r="3" fill="#fff" /><path d="M16 19l6-5 8 8v8h-6z" fill="#6c7fd0" /><path d="M2 19l8-6 19 17H2z" fill="#164a8b" />`,
};

/* ---------- data ---------- */

interface BigTool { kind: "big"; icon: string; lines: string[]; menu?: boolean }
interface ToolList { kind: "list"; items: [string, string][] }
type RibbonItem = BigTool | ToolList;

const RIBBON: { name: string; items: RibbonItem[] }[] = [
  { name: "boss", items: [
    { kind: "big", icon: "bossExtrude", lines: ["Extruded", "Boss/Base"] },
    { kind: "big", icon: "bossRevolve", lines: ["Revolved", "Boss/Base"] },
    { kind: "list", items: [["bossSweep", "Swept Boss/Base"], ["bossLoft", "Lofted Boss/Base"], ["bossBoundary", "Boundary Boss/Base"]] },
  ] },
  { name: "cut", items: [
    { kind: "big", icon: "cutExtrude", lines: ["Extruded", "Cut"] },
    { kind: "big", icon: "holeWizard", lines: ["Hole Wizard"], menu: true },
    { kind: "big", icon: "cutRevolve", lines: ["Revolved", "Cut"] },
    { kind: "list", items: [["cutSweep", "Swept Cut"], ["cutLoft", "Lofted Cut"], ["cutBoundary", "Boundary Cut"]] },
  ] },
  { name: "modify", items: [
    { kind: "big", icon: "fillet", lines: ["Fillet"], menu: true },
    { kind: "big", icon: "pattern", lines: ["Linear Pattern"], menu: true },
    { kind: "list", items: [["rib", "Rib"], ["draft", "Draft"], ["shell", "Shell"]] },
    { kind: "list", items: [["wrap", "Wrap"], ["intersect", "Intersect"], ["mirror", "Mirror"]] },
  ] },
  { name: "geometry", items: [
    { kind: "big", icon: "reference", lines: ["Referenc..."], menu: true },
    { kind: "big", icon: "curves", lines: ["Curves"], menu: true },
  ] },
  { name: "instant", items: [{ kind: "big", icon: "instant", lines: ["Instant3D"] }] },
];

const TABS = ["Features", "Sketch", "Sheet Metal", "Evaluate", "DimXpert", "SOLIDWORKS Add-Ins", "SOLIDWORKS MBD"];

const TREE: [string, string, boolean][] = [
  ["history", "History", true], ["sensors", "Sensors", false], ["annotations", "Annotations", true],
  ["material", "Material <not specified>", false], ["plane", "Front Plane", false], ["plane", "Top Plane", false],
  ["plane", "Right Plane", false], ["origin", "Origin", false], ["boss", "Boss-Extrude1", true],
  ["boss", "Boss-Extrude2", true], ["mirrorTree", "Mirror1", false], ["boss", "Boss-Extrude3", true],
  ["mirrorTree", "Mirror2", false], ["boss", "Boss-Extrude4", true],
];

const FILTERS = ["fVertex", "fEdge", "fFace", "fSurface", "fBody", "fAxis", "fPlane", "fPoint", "fSketch", "fSegment",
  "fMid", "fCenter", "fLine", "fDim", "fFinish", "fTol", "fNote", "fDatum", "fWeld", "fBead", "fTarget", "fThread",
  "fSymbol", "fMass", "fRoute", "fJoint"];

const APPS: [string, string, string][] = [
  ["files", "File Explorer", "open"], ["store", "Microsoft Store", ""], ["mail", "Mail", ""], ["chrome", "Google Chrome", "open"],
  ["window", "Viewer", ""], ["xapp", "X", ""], ["computer", "Remote computer", ""], ["solidworks", "SOLIDWORKS 2016", "active"],
  ["photos", "Photos", "open"],
];

/* Faceted circle points, angles measured from the vertical. */
const ring = (cx: number, cy: number, r: number, degrees: number[]) =>
  degrees.map((a) => {
    const t = (a * Math.PI) / 180;
    return `${Math.round((cx + r * Math.sin(t)) * 10) / 10},${Math.round((cy - r * Math.cos(t)) * 10) / 10}`;
  }).join(" ");

const ARCH = ring(1078, 537, 168, Array.from({ length: 14 }, (_, i) => -90 + (i * 180) / 13));
const HOLE = ring(1078, 537, 84, Array.from({ length: 24 }, (_, i) => i * 15));

@customElement("app-root")
export class AppRoot extends LitElement {
  static styles = css`
    :host {
      display: flex; flex-direction: column; width: 100%; height: 100vh; overflow: hidden;
      font: 14px/20px "Open Sans", "Noto Sans", sans-serif; color: #1a1a1a; background: #f7f7f7;
    }
    * { box-sizing: border-box; }
    button { font: inherit; color: inherit; background: none; border: 0; padding: 0; margin: 0; white-space: nowrap; }
    input { font: inherit; border: 0; padding: 0; outline: 0; background: none; min-width: 0; }
    .icon { display: block; width: 20px; height: 20px; flex: none; }
    .arrow { display: flex; align-items: center; justify-content: center; width: 17px; align-self: stretch; }
    .arrow::after, .drop::after { content: ""; border: 3px solid transparent; border-top: 4px solid #444; border-bottom: 0; }
    .arrow.dim::after { border-top-color: #8a8c94; }

    /* title bar */
    .title { position: relative; display: flex; align-items: center; height: 33px; padding: 2px 0 0 183px; border-bottom: 1px solid #8c8c8c; font-size: 13px; flex: none; }
    .logo { position: absolute; z-index: 2; left: 10px; top: 0; width: 145px; height: 37px; display: flex; align-items: center; padding: 2px 0 0 5px;
      border: 1px solid #8c8c8c; border-top: 0; background: linear-gradient(150deg, #fff 45%, #d2d2d2); color: #da291c; font-style: italic; font-size: 17px; }
    .mark { width: 29px; height: 34px; margin: -4px 3px 0 0; flex: none; }
    .solid { font-weight: 700; }
    .works { font-weight: 300; }
    .menus { display: flex; gap: 16px; width: 334px; }
    .pinned { padding-right: 6px; height: 30px; display: flex; align-items: center; border-right: 2px solid #b4b4b4; margin-right: 14px; }
    .quick { display: flex; align-items: center; }
    .split { display: flex; align-items: center; height: 26px; margin-right: 2px; }
    .split:nth-of-type(5) { margin-right: 0; }
    .pick { display: flex; height: 26px; }
    .pick-main { width: 26px; background: #b1b1b1; border: 1px solid #4a90bf; display: flex; align-items: center; justify-content: center; }
    .pick-menu { width: 13px; border: 1px solid #8c8c8c; border-left: 0; background: #fafafa; }
    .singles { display: flex; gap: 5px; margin-left: 3px; }
    .doc { flex: 1; text-align: center; font-size: 14px; }
    .forum { display: flex; align-items: center; width: 253px; height: 28px; border: 1px solid #c3c3c3; padding-left: 1px; font-size: 12px; }
    .forum .icon { margin: 0 4px; }
    .forum .find-icon .icon { width: 25px; height: 25px; margin: 0 0 0 4px; }
    .forum-text { flex: 1; height: 25px; padding-left: 3px; background: #ebedf1; }
    .forum-text::placeholder { color: #606060; opacity: 1; }
    .wins { display: flex; align-items: center; }
    .help { width: 26px; padding-left: 6px; font: 700 18px/20px "Open Sans", sans-serif; color: #555; text-align: center; }
    .wins .arrow { width: 16px; }
    .win { width: 26px; display: flex; justify-content: center; }

    /* ribbon */
    .ribbon-row { display: flex; height: 87px; flex: none; font-size: 13px; }
    .ribbon { flex: 1; display: flex; border-right: 1px solid #8c8c8c; border-bottom: 1px solid #8c8c8c; }
    .group { display: grid; position: relative; padding-right: 1px; }
    .group::after { content: ""; position: absolute; right: 0; top: 6px; bottom: 3px; width: 1px; background: #c8c8c8; }
    .group.instant::after { display: none; }
    .boss { grid-template-columns: 71px 71px 163px; padding-left: 6px; }
    .cut { grid-template-columns: 66px 82px 66px 124px; }
    .modify { grid-template-columns: 40px 94px 70px 91px; }
    .geometry { grid-template-columns: 73px 52px; }
    .instant { grid-template-columns: 76px; }
    .big { display: flex; flex-direction: column; align-items: center; justify-content: flex-start; padding-top: 18px; line-height: 19px; }
    .big .icon { margin-bottom: 1px; }
    .big.drop { padding-top: 11px; }
    .big.drop::after { margin-top: 19px; }
    .list { display: flex; flex-direction: column; padding: 6px 0 0 2px; }
    .tool { display: flex; align-items: center; gap: 6px; height: 26px; }
    .spelling { width: 63px; height: 33px; border: 1px solid #8c8c8c; border-left: 0; display: flex; align-items: center; justify-content: space-between; padding: 0 3px 0 4px; }
    .grip { width: 3px; height: 26px; border-left: 3px dotted #999; }
    .abc { font: 700 11px/11px "Liberation Sans", sans-serif; display: grid; justify-items: end; margin-left: 6px; }
    .abc .icon { width: 18px; height: 18px; margin-top: -3px; }

    /* tab row and view toolbar */
    .tab-row { display: flex; height: 28px; background: #c4c8d3; flex: none; }
    .tabs { display: grid; grid-template-columns: 80px 62px 98px 74px 82px 173px 154px; border-bottom: 1px solid #8c8c8c; }
    .tab { background: #d4d4d4; border-right: 1px solid #8c8c8c; color: #333; }
    .tab.on { background: #f7f7f7; font-weight: 700; font-size: 13px; }
    .hud { display: flex; align-items: center; margin-left: 177px; padding-top: 2px; }
    .view { width: 26px; display: flex; justify-content: center; }
    .hud .arrow { width: 12px; margin-right: 2px; }
    .docwins { display: flex; align-items: center; margin-left: auto; padding: 2px 6px 0 0; }

    /* workspace */
    .work { flex: 1; min-height: 0; display: grid; grid-template-columns: 239px 1fr; }
    .side { display: flex; flex-direction: column; border-right: 1px solid #8c8c8c; min-width: 0; min-height: 0; }
    .handle { height: 16px; margin: 2px 3px 4px 0; border: 1px solid #cfcfcf; border-width: 1px 0; display: grid; place-items: center; flex: none; }
    .dot { width: 6px; height: 6px; border-radius: 50%; background: #bbb; border: 1px solid #999; }
    .managers { display: flex; height: 26px; margin-right: 3px; border-bottom: 1px solid #b5b5b5; flex: none; }
    .manager { width: 40px; display: grid; place-items: center; background: #d4d4d4; border: 1px solid #8c8c8c; border-left: 0; border-bottom: 0; }
    .manager.on { background: #f7f7f7; }
    .scroll-tabs { margin-left: auto; display: grid; place-items: center; width: 18px; }
    .filter { display: flex; align-items: center; height: 32px; margin: 0 3px; border: 1px solid #c6c6c6; padding: 0 1px; flex: none; }
    .filter .icon { width: 18px; height: 18px; }
    .filter-text { flex: 1; height: 24px; }
    .tree { list-style: none; margin: 0 3px 0 0; padding: 0; border-bottom: 3px solid #2f80c4; flex: none; position: relative; }
    .tree::after { content: ""; position: absolute; left: 0; right: 0; bottom: -3px; height: 1px; background: #2a0fa0; }
    .node { display: flex; align-items: center; height: 24px; white-space: nowrap; }
    .node .icon { width: 18px; height: 18px; margin-right: 5px; }
    .root { padding-left: 2px; }
    .twist { width: 25px; height: 24px; padding-left: 8px; display: flex; align-items: center; flex: none; }
    .twist.has::before { content: ""; border: 4px solid transparent; border-left: 5px solid #666; border-right: 0; }
    .hscroll { display: flex; align-items: center; height: 19px; margin: auto 3px 2px 0; background: #f0f0f0; flex: none; }
    .hscroll .icon { width: 20px; height: 20px; margin: 0; }
    .thumb { width: 146px; height: 19px; background: #cdcdcd; margin-right: auto; }
    .view3d { position: relative; background: #c4c8d3; min-width: 0; min-height: 0; overflow: hidden; }
    .model { display: block; width: 100%; height: 100%; }
    .splitter { position: absolute; left: 0; top: 370px; width: 8px; height: 39px; background: #f7f7f7; border: 1px solid #8c8c8c; border-left: 0; display: grid; place-items: center; }
    .pane { position: absolute; right: 0; top: 22px; width: 33px; border: 1px solid #8c8c8c; border-right: 0; }
    .pane-tab { display: grid; place-items: center; width: 100%; height: 30px; background: #d8d8d8; border-bottom: 1px solid #8c8c8c; }
    .pane-tab:first-child { background: #f7f7f7; height: 29px; }
    .pane-tab:last-child { border-bottom: 0; height: 29px; }
    .orientation { position: absolute; left: 12px; bottom: 0; font: 700 17px/24px Lato, "Open Sans", sans-serif; color: #111; }

    /* bottom tabs */
    .bottom { display: flex; height: 21px; border-top: 1px solid #8c8c8c; flex: none; }
    .nav { display: flex; padding-left: 2px; }
    .step { width: 20px; height: 20px; background: #a3a6b9; border: 1px solid #77758c; border-top-color: #222; display: grid; place-items: center; }
    .step .icon { width: 14px; height: 14px; }
    .sheet { width: 89px; background: #d4d4d4; border-right: 1px solid #8c8c8c; }
    .sheet.on { width: 77px; background: none; font-weight: 700; font-size: 15px; color: #000; }
    .sheet.wide { width: 144px; padding-right: 18px; }

    /* filter toolbar */
    .filters { display: flex; align-items: center; height: 33px; padding: 2px 0 0 3px; border-bottom: 1px solid #8c8c8c; flex: none; }
    .filters .grip { margin-right: 7px; }
    .fbtn { width: 27px; display: grid; place-items: center; flex: none; }
    .filters .pick-main { width: 33px; }
    .filters .pick-menu { width: 13px; }
    .bar { width: 1px; height: 22px; background: #8c8c8c; margin: 0 6px 0 2px; }
    .bar.end { height: 31px; margin-left: 6px; }

    /* status bar */
    .status { display: flex; height: 21px; padding: 1px 0 0 1px; flex: none; color: #000; line-height: 22px; }
    .status .cell { border-left: 1px solid #cfcfcf; height: 19px; }
    .gap { width: 7px; margin-left: auto; }
    .mode { width: 87px; padding-left: 3px; }
    .gap2 { width: 16px; }
    .units { width: 200px; padding: 0 1px 0 38px; display: flex; align-items: center; }
    .up { border: 3px solid transparent; border-bottom: 4px solid #444; border-top: 0; margin-left: 26px; }
    .units .icon { width: 18px; height: 18px; margin-left: auto; }

    /* taskbar */
    .taskbar { display: flex; height: 50px; flex: none; color: #fff; background: linear-gradient(90deg, #253840, #26353b 45%, #1d2125 66%, #1b2a31 76%, #1d2d34); }
    .start { width: 60px; display: grid; place-items: center; }
    .win-mark { width: 20px; height: 20px; }
    .find { display: flex; align-items: center; width: 430px; background: #f2f2f2; border: 1px solid #bcbcbc; padding-left: 14px; color: #333; font-size: 18px; }
    .find .glass { width: 20px; height: 20px; margin-right: 15px; flex: none; }
    .find-text { flex: 1; height: 40px; }
    .find-text::placeholder { color: #3a3a3a; opacity: 1; }
    .taskview { width: 63px; padding-right: 4px; display: grid; place-items: center; }
    .tv { width: 22px; height: 22px; }
    .app { position: relative; width: 62px; display: grid; place-items: center; }
    .art { width: 30px; height: 30px; }
    .app.open::after, .app.active::after { content: ""; position: absolute; bottom: 0; left: 6px; right: 5px; height: 3px; background: #76b9ed; }
    .app.active { background: #525d63; }
    .app.active::after { left: 0; right: 0; }
    .tray { margin-left: auto; display: flex; align-items: center; border-right: 1px solid #66737a; margin-right: 5px; padding-right: 10px; }
    .trayicon { width: 30px; display: grid; place-items: center; }
    .trayart { width: 22px; height: 22px; }
    .clock { width: 86px; text-align: center; line-height: 23px; }
    .notice { width: 51px; display: grid; place-items: center; }
    .notice .trayart { width: 24px; height: 24px; }
  `;

  @state() private tab = "Features";
  @state() private sheet = "Model";

  private split(name: string, label: string, dim = false) {
    return html`<span class="split"><button aria-label=${label}>${icon(name)}</button><button class="arrow ${dim ? "dim" : ""}" aria-label="${label} options"></button></span>`;
  }

  private picker() {
    return html`<span class="pick"><button class="pick-main" aria-label="Select">${icon("select")}</button><button class="pick-menu arrow" aria-label="Select options"></button></span>`;
  }

  private titleBar() {
    return html`<header class="title">
      <div class="logo">
        <svg class="mark" viewBox="0 0 29 34" aria-hidden="true">
          <g fill="none" stroke="#da291c" stroke-width="2.200" stroke-linecap="round" stroke-linejoin="round">
            <path d="M9 4c4-2 8-1 7 1s-5 5-8 7c5-1 7 2 4 8s-7 9-11 9c3-2 5-6 7-12" />
            <path d="M27 13c-5-1-9 1-8 4l4 4c2 3-2 6-8 6" stroke-width="3" />
          </g>
        </svg><span class="solid">SOLID</span><span class="works">WORKS</span>
      </div>
      <nav class="menus">${["File", "Edit", "View", "Insert", "Tools", "Window", "Help"].map((m) => html`<button>${m}</button>`)}</nav>
      <span class="pinned"><button aria-label="Pin menu">${icon("pin")}</button></span>
      <div class="quick">
        ${this.split("newDoc", "New")}${this.split("open", "Open")}${this.split("save", "Save")}${this.split("print", "Print")}${this.split("undo", "Undo", true)}
        ${this.picker()}
        <span class="singles"><button aria-label="Rebuild">${icon("traffic")}</button><button aria-label="File properties">${icon("options")}</button><button aria-label="Options">${icon("gear")}</button></span>
        <button class="arrow" aria-label="More options"></button>
      </div>
      <span class="doc">Part2</span>
      <div class="forum">${icon("bubbles")}<input class="forum-text" aria-label="Search Community Forum" placeholder="Search Community Forum" /><button class="find-icon" aria-label="Search">${icon("magnifier")}</button><button class="arrow" aria-label="Search scope"></button></div>
      <div class="wins">
        <button class="help" aria-label="Help">?</button><button class="arrow" aria-label="Help options"></button>
        ${["minimize", "restore", "close"].map((w) => html`<button class="win" aria-label=${w}>${icon(w)}</button>`)}
      </div>
    </header>`;
  }

  private ribbon() {
    return html`<section class="ribbon-row">
      <div class="ribbon">${RIBBON.map((g) => html`<div class="group ${g.name}">${g.items.map((it) =>
        it.kind === "big"
          ? html`<button class=${classMap({ big: true, drop: !!it.menu })}>${icon(it.icon)}${it.lines.map((l) => html`<span>${l}</span>`)}</button>`
          : html`<div class="list">${it.items.map(([i, l]) => html`<button class="tool">${icon(i)}<span>${l}</span></button>`)}</div>`)}</div>`)}</div>
      <div class="spelling"><span class="grip"></span><button class="abc" aria-label="Spell check"><span>Abc</span>${icon("spell")}</button><button aria-label="More tools">${icon("more")}</button></div>
    </section>`;
  }

  private tabRow() {
    const v = (n: string, menu = false) => html`<button class="view" aria-label=${n}>${icon(n)}</button>${menu ? html`<button class="arrow dim" aria-label="${n} options"></button>` : ""}`;
    return html`<div class="tab-row">
      <nav class="tabs">${TABS.map((t) => html`<button class=${classMap({ tab: true, on: t === this.tab })} @click=${() => (this.tab = t)}>${t}</button>`)}</nav>
      <div class="hud">${v("zoomFit")}${v("zoomArea")}${v("prevView")}${v("section")}${v("viewTools")}${v("orient", true)}${v("display", true)}${v("eye", true)}${v("appearance")}${v("scene", true)}${v("monitor", true)}</div>
      <div class="docwins">${["dockLeft", "dockRight", "minimizeDim", "restoreDim", "closeDim"].map((w) => html`<button class="win" aria-label=${w}>${icon(w)}</button>`)}</div>
    </div>`;
  }

  private sidePanel() {
    return html`<aside class="side">
      <div class="handle"><span class="dot"></span></div>
      <div class="managers">
        ${["part", "property", "config", "dimx", "displayMgr"].map((m, i) => html`<button class=${classMap({ manager: true, on: i === 0 })} aria-label=${m}>${icon(m)}</button>`)}
        <button class="scroll-tabs" aria-label="More tabs">${icon("next")}</button>
      </div>
      <div class="filter">${icon("filter")}<input class="filter-text" aria-label="Filter tree" /></div>
      <ul class="tree">
        <li class="node root">${icon("part")}<span>Part2&nbsp; (Default&lt;&lt;Default&gt;_Disp</span></li>
        ${TREE.map(([i, l, open]) => html`<li class="node"><button class=${classMap({ twist: true, has: open })} aria-label="Expand ${l}" ?disabled=${!open}></button>${icon(i)}<span>${l}</span></li>`)}
      </ul>
      <div class="hscroll"><button aria-label="Scroll left">${icon("prev")}</button><span class="thumb"></span><button aria-label="Scroll right">${icon("next")}</button></div>
    </aside>`;
  }

  private ear(x: number) {
    return svg`
      <rect x=${x} y="184" width="118" height="168" fill="url(#boss)" stroke="#16181c" stroke-width="1.200" />
      <rect x=${x} y="352" width="118" height="185" fill="#7b8090" stroke="#111" stroke-width="1.200" />`;
  }

  private viewport() {
    return html`<main class="view3d">
      <svg class="model" viewBox="239 148 1681 807" role="img" aria-label="Right view of Part2">
        <defs><linearGradient id="boss" x1="0" y1="0" x2="0" y2="1">
          <stop offset="0" stop-color="#979aae" /><stop offset=".15" stop-color="#9094a8" /><stop offset=".36" stop-color="#9195a9" />
          <stop offset=".55" stop-color="#a9adc2" /><stop offset=".78" stop-color="#9498aa" /><stop offset="1" stop-color="#7c7e90" />
        </linearGradient></defs>
        ${this.ear(741.5)}${this.ear(1296.5)}
        <polygon points="741.5,537 ${ARCH} 1414.5,537 1414.5,890 741.5,890" fill="#7b8090" stroke="#111" stroke-width="1.300" />
        <path d="M742 352h118M1296 352h118" stroke="#111" stroke-width="1.600" />
        <polygon points=${HOLE} fill="#c4c8d3" stroke="#111" stroke-width="1.300" />
        <rect x="288" y="859" width="4" height="24" fill="#8fc893" stroke="#1a701e" stroke-width="1.600" />
        <path d="M290 850l5 11h-10z" fill="#146b18" />
        <rect x="264" y="885" width="22" height="4" fill="#b4b6f5" stroke="#1b1bb8" stroke-width="1.600" />
        <path d="M252 887l12-5v10z" fill="#1919bd" />
        <circle cx="290" cy="887" r="5.500" fill="#9c1010" />
        <g font-family="Open Sans, sans-serif" font-size="13" text-anchor="middle">
          <text x="289" y="846" fill="#118a16">Y</text><text x="247" y="891" fill="#1414e6">Z</text>
        </g>
        <path d="M288 883l4 7M292 883l-4 7" stroke="#f22" />
      </svg>
      <div class="splitter"><span class="dot"></span></div>
      <nav class="pane">${["home", "library", "folderOpen", "palette", "sphere", "property", "forum"].map((p) => html`<button class="pane-tab" aria-label=${p}>${icon(p)}</button>`)}</nav>
      <span class="orientation">*Right</span>
    </main>`;
  }

  private bottomBars() {
    const steps = ["M4 3v14M16 3L7 10l9 7z", "M14 3l-9 7 9 7z", "M6 3l9 7-9 7z", "M16 3v14M4 3l9 7-9 7z"];
    return html`<div class="bottom">
        <div class="nav">${steps.map((d) => html`<button class="step" aria-label="Change sheet"><svg class="icon" viewBox="0 0 20 20"><path d=${d} fill="#77758c" stroke="#77758c" stroke-width="2" /></svg></button>`)}</div>
        ${["Model", "3D Views", "Motion Study 1"].map((s) => html`<button class=${classMap({ sheet: true, on: s === this.sheet, wide: s.length > 10 })} @click=${() => (this.sheet = s)}>${s}</button>`)}
      </div>
      <div class="filters"><span class="grip"></span>
        ${["clearFilter", "clearAll", "allFilters"].map((f) => html`<button class="fbtn" aria-label=${f}>${icon(f)}</button>`)}
        ${this.picker()}
        <button class="fbtn" aria-label="Invert selection">${icon("invert")}</button><span class="bar"></span>
        ${FILTERS.map((f) => html`<button class="fbtn" aria-label=${f}>${icon(f)}</button>`)}
        <span class="bar end"></span>
      </div>
      <footer class="status"><span>SOLIDWORKS Premium 2016 x64 Edition</span>
        <span class="cell gap"></span><span class="cell mode">Editing Part</span><span class="cell gap2"></span>
        <span class="cell units">MMGS<span class="up"></span>${icon("tag")}</span>
      </footer>`;
  }

  private tray() {
    const line = (body: SVGTemplateResult, label: string) => html`<button class="trayicon" aria-label=${label}><svg class="trayart" viewBox="0 0 22 22">${body}</svg></button>`;
    return html`<div class="tray">
      ${line(svg`<path d="M3 15l8-8 8 8" fill="none" stroke="#fff" stroke-width="1.500" />`, "Hidden icons")}
      ${line(svg`<path d="M1 4l8-3 7 2v10l-7 4-8-3z" fill="#d3262b" /><path d="M9 6l7-3v10l-7 4z" fill="#8f1216" /><text x="1" y="13" font-size="9" font-weight="bold" font-family="Liberation Sans, sans-serif" fill="#fff">SW</text><path d="M17 7h4v9h-4zM17 18h4v3h-4z" fill="#ffeb1a" stroke="#665c00" stroke-width=".6" />`, "SOLIDWORKS")}
      ${line(svg`<g fill="none" stroke="#ddd" stroke-width="1.300"><path d="M4 20C4 11 10 4 19 4" /><path d="M8 20c0-7 5-12 11-12" /><path d="M12 20c0-4 3-8 7-8" /></g><circle cx="17" cy="18" r="2" fill="#fff" />`, "Network")}
      ${line(svg`<path d="M2 6h17v10H2z" fill="none" stroke="#fff" stroke-width="1.500" /><path d="M4 8h5v6H4zM19 9h2v4h-2z" fill="#fff" /><circle cx="15" cy="16" r="5.500" fill="#128a26" /><path d="M15 12l3 4-3 2-3-2zM15 15v5" fill="none" stroke="#fff" />`, "Battery")}
      ${line(svg`<path d="M1 8h3l4-4v14l-4-4H1z" fill="none" stroke="#fff" stroke-width="1.200" /><path d="M11 8c1 2 1 4 0 6M14 6c2 3 2 7 0 10M17 3c4 4 4 12 0 16" fill="none" stroke="#fff" stroke-width="1.200" />`, "Volume")}
      <time class="clock">01:01<br />8.11.2020</time>
      <button class="notice" aria-label="Notifications"><svg class="trayart" viewBox="0 0 24 24"><path d="M3 4h18v15h-6l-3 3-3-3H3z" fill="none" stroke="#fff" stroke-width="1.500" /></svg></button>
    </div>`;
  }

  private taskbar() {
    return html`<nav class="taskbar">
      <button class="start" aria-label="Start"><svg class="win-mark" viewBox="0 0 20 20"><path d="M0 3l8-1v7H0zM9 2l11-2v9H9zM0 10h8v7l-8-1zM9 10h11v10L9 18z" fill="#fff" /></svg></button>
      <label class="find"><svg class="glass" viewBox="0 0 22 22"><circle cx="14" cy="8" r="6.500" fill="none" stroke="#222" stroke-width="1.600" /><path d="M9 13l-8 8" stroke="#222" stroke-width="1.600" /></svg><input class="find-text" aria-label="Aramak için buraya yazın" placeholder="Aramak için buraya yazın" /></label>
      <button class="taskview" aria-label="Task view"><svg class="tv" viewBox="0 0 22 22"><path d="M1 1v3h13V1M1 21v-3h13v3M1 7h13v8H1zM19 1v20" fill="none" stroke="#fff" stroke-width="1.300" /><path d="M17 7h4v4h-4z" fill="#fff" /></svg></button>
      ${APPS.map(([a, label, mode]) => html`<button class="app ${mode}" aria-label=${label}><svg class="art" viewBox="0 0 32 32">${APP_ART[a]}</svg></button>`)}
      ${this.tray()}
    </nav>`;
  }

  render() {
    return html`${this.titleBar()}${this.ribbon()}${this.tabRow()}
      <div class="work">${this.sidePanel()}${this.viewport()}</div>
      ${this.bottomBars()}${this.taskbar()}`;
  }
}
